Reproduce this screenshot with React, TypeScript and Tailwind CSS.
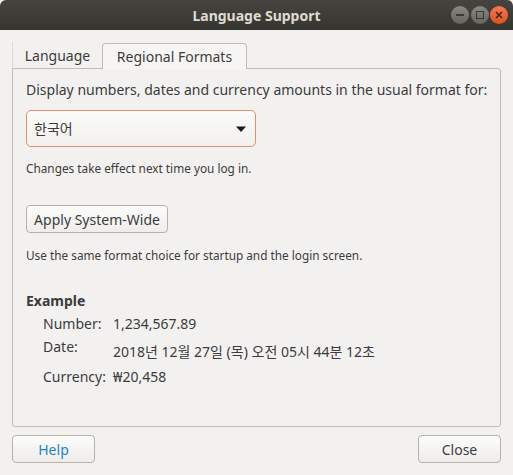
import React from "react";

const font = { fontFamily: '"Noto Sans", "Noto Sans CJK KR", sans-serif' };

export default function App() {
  return (
    <div className="w-[513px] h-[475px] bg-[#f2f1f0] flex flex-col text-[#3c3c3c] overflow-hidden" style={font}>
      {/* Title bar */}
      <div className="h-[30px] shrink-0 bg-gradient-to-b from-[#45443f] to-[#36352f] rounded-t-[6px] flex items-center relative">
        <div className="flex-1 text-center text-[14px] font-bold text-[#dfdbd2]">Language Support</div>
        <div className="absolute right-[5px] top-[6px] flex gap-[1.5px]">
          <div className="w-[18px] h-[18px] rounded-full bg-gradient-to-b from-[#8a8984] to-[#64635e] flex items-center justify-center">
            <div className="w-[8px] h-[2px] bg-[#3a3934]" />
          </div>
          <div className="w-[18px] h-[18px] rounded-full bg-gradient-to-b from-[#8a8984] to-[#64635e] flex items-center justify-center">
            <div className="w-[8px] h-[8px] border-[1.5px] border-[#3a3934]" />
          </div>
          <div className="w-[18px] h-[18px] rounded-full bg-gradient-to-b from-[#f47a4e] to-[#e0501f] flex items-center justify-center">
            <svg width="8" height="8" viewBox="0 0 8 8">
              <path d="M1 1L7 7M7 1L1 7" stroke="#3a2a22" strokeWidth="1.6" />
            </svg>
          </div>
        </div>
      </div>

      {/* Body */}
      <div className="flex-1 flex flex-col px-[12px] pt-[12px]">
        {/* Tabs */}
        <div className="flex items-end h-[26px]">
          <div className="h-[26px] w-[90px] border-l border-[#dcdad5] flex items-center justify-center text-[14px] text-[#3c3c3c]">
            Language
          </div>
          <div className="h-[26px] w-[145px] bg-[#f6f5f4] border border-b-0 border-[#c0bdb8] rounded-t-[4px] flex items-center justify-center text-[14px] text-[#3c3c3c] relative top-[1px]">
            Regional Formats
          </div>
        </div>

        {/* Panel */}
        <div className="h-[359px] border border-[#c0bdb8] rounded-b-[3px] rounded-tr-[3px] bg-[#f2f1f0] px-[13px] pt-[11px] flex flex-col">
          <div className="text-[14px] leading-[20px] whitespace-nowrap">Display numbers, dates and currency amounts in the usual format for:</div>
          <div className="mt-[10px] w-[230px] h-[37px] rounded-[5px] border border-[#e0906c] bg-gradient-to-b from-[#fbfbfa] to-[#f1f0ef] flex items-center px-[7px] justify-between">
            <span className="text-[14px]">한국어</span>
            <svg width="12" height="8" viewBox="0 0 12 8" className="mr-[1px]">
              <path d="M1 1.5H11L6 7Z" fill="#1a1a1a" />
            </svg>
          </div>
          <div className="mt-[13px] text-[11.8px] leading-[16px]">Changes take effect next time you log in.</div>
          <div className="mt-[29px] w-[142px] h-[28px] rounded-[4px] border border-[#b6b2ab] bg-gradient-to-b from-[#fcfcfb] to-[#eeedec] flex items-center justify-center text-[14px]">
            Apply System-Wide
          </div>
          <div className="mt-[14px] text-[11.8px] leading-[16px]">Use the same format choice for startup and the login screen.</div>
          <div className="mt-[29px] text-[14px] font-bold leading-[18px]">Example</div>
          <div className="ml-[17px] mt-[4px] grid grid-cols-[70px_auto] text-[14px] leading-[20px] gap-y-[3px]">
            <div>Number:</div>
            <div>1,234,567.89</div>
            <div>Date:</div>
            <div className="pt-[5px]">2018년 12월 27일 (목) 오전 05시 44분 12초</div>
            <div className="pt-[2px]">Currency:</div>
            <div className="pt-[2px]">₩20,458</div>
          </div>
        </div>

        {/* Bottom buttons */}
        <div className="flex justify-between mt-[8px]">
          <div className="w-[83px] h-[28px] rounded-[4px] border border-[#b6b2ab] bg-gradient-to-b from-[#fcfcfb] to-[#eeedec] flex items-center justify-center text-[14px] text-[#1d84c6]">
            Help
          </div>
          <div className="w-[83px] h-[28px] rounded-[4px] border border-[#b6b2ab] bg-gradient-to-b from-[#fcfcfb] to-[#eeedec] flex items-center justify-center text-[14px]">
            Close
          </div>
        </div>
      </div>
    </div>
  );
}
